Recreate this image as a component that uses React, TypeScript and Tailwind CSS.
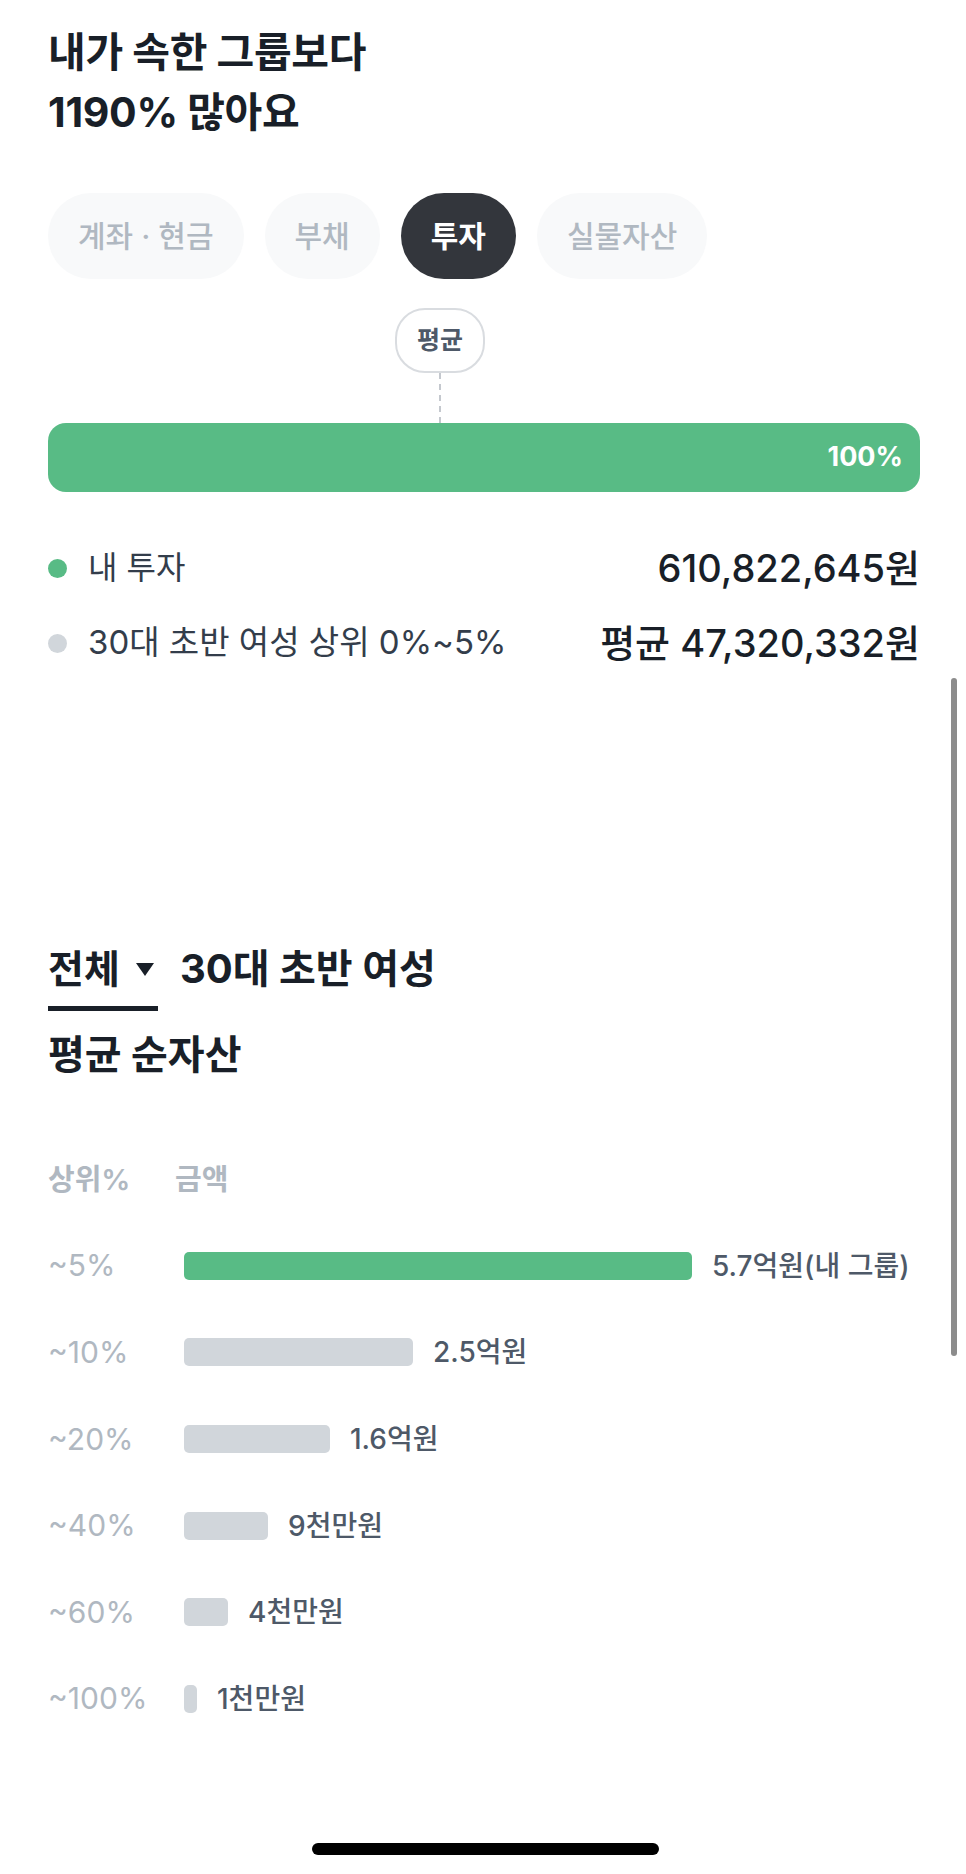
const tabs = [
  { label: "계좌 · 현금", active: false },
  { label: "부채", active: false },
  { label: "투자", active: true },
  { label: "실물자산", active: false },
];

const rows = [
  { pct: "~5%", width: 508, amount: "5.7억원(내 그룹)", mine: true },
  { pct: "~10%", width: 229, amount: "2.5억원", mine: false },
  { pct: "~20%", width: 146, amount: "1.6억원", mine: false },
  { pct: "~40%", width: 84, amount: "9천만원", mine: false },
  { pct: "~60%", width: 44, amount: "4천만원", mine: false },
  { pct: "~100%", width: 13, amount: "1천만원", mine: false },
];

const App = () => {
  return (
    <div className="relative w-[966px] h-[1874px] overflow-hidden bg-white font-[Inter,'Noto_Sans_CJK_KR',sans-serif] text-[#191f28]">
      <div className="pl-[48px] pr-[46px] pt-[22px]">
        <h1 className="text-[41px] font-bold leading-[60px] tracking-[-0.3px]">
          내가 속한 그룹보다
          <br />
          1190% 많아요
        </h1>

        <div className="mt-[51px] flex gap-[21px]">
          {tabs.map((t) => (
            <div
              key={t.label}
              className={
                t.active
                  ? "h-[86px] px-[30px] rounded-full flex items-center bg-[#33363c] text-white text-[30px] font-bold"
                  : "h-[86px] px-[30px] rounded-full flex items-center bg-[#f8f9fa] text-[#b0b8c1] text-[30px] font-medium"
              }
            >
              {t.label}
            </div>
          ))}
        </div>

        {/* average marker */}
        <div className="relative mt-[29px] h-[115px]">
          <div className="absolute left-[347px] top-0 w-[90px] h-[65px] rounded-[30px] border-2 border-[#d9dce0] bg-white flex items-center justify-center text-[25px] font-bold text-[#4e5968]">
            평균
          </div>
          <div className="absolute left-[391px] top-[65px] h-[50px] border-l-2 border-dashed border-[#c4c8ce]" />
        </div>

        <div className="h-[69px] rounded-[18px] bg-[#58bb85] flex items-center justify-end pr-[17px] text-white text-[27px] font-bold">
          100%
        </div>

        <div className="mt-[52px] h-[48px] flex items-center justify-between">
          <div className="flex items-center">
            <span className="w-[19px] h-[19px] rounded-full bg-[#58bb85]" />
            <span className="ml-[21px] text-[32px] text-[#333d4b]">내 투자</span>
          </div>
          <span className="text-[38px] font-medium">610,822,645원</span>
        </div>
        <div className="mt-[27px] h-[48px] flex items-center justify-between">
          <div className="flex items-center">
            <span className="w-[19px] h-[19px] rounded-full bg-[#d1d6db]" />
            <span className="ml-[21px] text-[33px] text-[#333d4b]">30대 초반 여성 상위 0%~5%</span>
          </div>
          <span className="text-[38px] font-medium">평균 47,320,332원</span>
        </div>

        <div className="mt-[277px] flex items-start">
          <div className="flex flex-col">
            <div className="h-[50px] flex items-center text-[39px] font-bold">
              전체
              <svg className="ml-[15px]" width="20" height="15" viewBox="0 0 20 15">
                <polygon points="1,1 19,1 10,14" fill="#191f28" />
              </svg>
            </div>
            <div className="mt-[12px] w-[110px] h-[5px] bg-[#191f28]" />
          </div>
          <div className="ml-[22px] h-[50px] flex items-center text-[40px] font-bold">30대 초반 여성</div>
        </div>

        <div className="mt-[19px] h-[50px] flex items-center text-[40px] font-bold">평균 순자산</div>

        <div className="mt-[56px]">
          <div className="h-[86.6px] flex items-center text-[29px] font-semibold text-[#b0b8c1]">
            <span className="w-[127px]">상위%</span>
            <span>금액</span>
          </div>
          {rows.map((r) => (
            <div key={r.pct} className="h-[86.6px] flex items-center">
              <span className="w-[136px] text-[30px] text-[#b0b8c1]">{r.pct}</span>
              <div
                className={r.mine ? "h-[28px] rounded-[5px] bg-[#58bb85]" : "h-[28px] rounded-[5px] bg-[#d1d6db]"}
                style={{ width: r.width }}
              />
              <span className="ml-[20px] text-[28px] font-medium text-[#4e5968]">{r.amount}</span>
            </div>
          ))}
        </div>
      </div>

      {/* scroll indicator + home bar */}
      <div className="absolute left-[951px] top-[678px] w-[6px] h-[678px] rounded-full bg-[#8c8c8c]" />
      <div className="absolute left-[312px] top-[1843px] w-[347px] h-[12px] rounded-full bg-black" />
    </div>
  );
};

export default App;
